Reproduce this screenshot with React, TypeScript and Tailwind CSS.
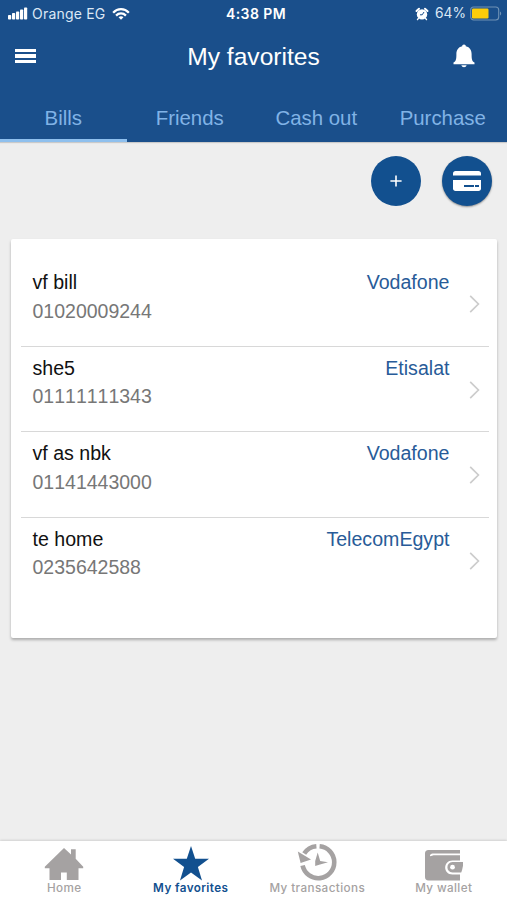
import { useState } from "react";

const tabs = ["Bills", "Friends", "Cash out", "Purchase"];

const favorites = [
  { name: "vf bill", number: "01020009244", provider: "Vodafone" },
  { name: "she5", number: "01111111343", provider: "Etisalat" },
  { name: "vf as nbk", number: "01141443000", provider: "Vodafone" },
  { name: "te home", number: "0235642588", provider: "TelecomEgypt" },
];

function StatusBar() {
  return (
    <div className="grid h-[27px] grid-cols-3 items-center pl-2 pr-[5px] text-[14px] text-[#dce8f5]">
      <div className="flex items-center">
        <svg width="20" height="13" viewBox="0 0 20 13" fill="white">
          <rect x="0" y="8" width="3.2" height="4.5" rx="0.8" />
          <rect x="4" y="6" width="3.2" height="6.5" rx="0.8" />
          <rect x="8" y="4.5" width="3.2" height="8" rx="0.8" />
          <rect x="12" y="2.5" width="3.2" height="10" rx="0.8" />
          <rect x="16" y="0.5" width="3.2" height="12" rx="0.8" />
        </svg>
        <span className="ml-1 whitespace-nowrap text-[14px] tracking-[0.2px]">Orange EG</span>
        <svg className="ml-[7px]" width="18" height="14" viewBox="0 0 19 14" fill="none" stroke="white" strokeWidth="2.4">
          <path d="M1.2 5.6C5.8 0.7 13.2 0.7 17.8 5.6" />
          <path d="M4.3 8.7C7.2 5.7 11.8 5.7 14.7 8.7" />
          <path d="M9.5 13L6.9 10.3C8.3 9 10.7 9 12.1 10.3Z" fill="white" stroke="none" />
        </svg>
      </div>
      <span className="pl-[2px] text-center text-[14px] font-semibold tracking-[0.4px] text-white">4:38 PM</span>
      <div className="flex items-center justify-end">
        <svg width="14" height="14" viewBox="0 0 14 14">
          <path d="M1.5 4L4 1.7M12.5 4L10 1.7" stroke="white" strokeWidth="2" strokeLinecap="round" />
          <path d="M3.4 11.4L2.5 12.6M10.6 11.4L11.5 12.6" stroke="white" strokeWidth="1.4" strokeLinecap="round" />
          <circle cx="7" cy="7.4" r="5.2" fill="white" />
          <path d="M9 5L7.2 7.8H5" fill="none" stroke="#1a4f8b" strokeWidth="1" />
        </svg>
        <span className="ml-[6px] text-[13.8px]">64%</span>
        <svg className="ml-[4px]" width="32" height="15" viewBox="0 0 32 15">
          <rect x="0.7" y="1" width="28" height="13" rx="3" fill="none" stroke="#6f92b5" strokeWidth="1.1" />
          <rect x="2" y="2.5" width="16.5" height="10" rx="1.2" fill="#fccd0a" />
          <path d="M30 5.5C31.6 6 31.6 9 30 9.5Z" fill="#6f92b5" />
        </svg>
      </div>
    </div>
  );
}

function HomeIcon() {
  return (
    <svg width="40" height="33" viewBox="0 0 40 33" fill="#a5a2a2">
      <path d="M20 0L27 6.4V1.3H31.7V10.7L39.2 18.8V20.3H34.5V32H22.8V24.5H17V32H5.5V20.3H0.8V18.8Z" />
    </svg>
  );
}

function StarIcon() {
  return (
    <svg width="36" height="35" viewBox="0 0 36 35" fill="#12508f">
      <path d="M18 0L22.2 12.8H36L24.9 21L29 34.5L18 26.4L7 34.5L11.1 21L0 12.8H13.8Z" />
    </svg>
  );
}

function HistoryIcon() {
  return (
    <svg width="40" height="38" viewBox="0 0 40 38">
      <g fill="none" stroke="#a5a2a2" strokeWidth="4.6">
        <path d="M22.6 3.3A16 16 0 1 1 5.6 22.6" />
        <path d="M7.2 10.6A16 16 0 0 1 19.4 3.2" />
      </g>
      <path d="M0.8 8.6L14 16.5L3.6 20Z" fill="#a5a2a2" />
      <path d="M20.7 9.5L23.2 18L31 19.3L23 21.4L18.2 23V18Z" fill="#a5a2a2" />
    </svg>
  );
}

function WalletIcon() {
  return (
    <svg width="40" height="31" viewBox="0 0 40 31">
      <path d="M4.5 0H36V3.6H8.5C6.2 3.8 5.2 6.2 6.6 6.2L9.5 5.3H36V10.5H28.5C18.8 10.5 18.8 24.5 28.5 24.5H36V30.5H4.5C2.2 30.5 1 29.3 1 27V3.5C1 1.2 2.2 0 4.5 0Z" fill="#a5a2a2" />
      <path d="M28.5 12H39V15.5C38.6 18 38.2 20 37.2 22.5H28.5C21.7 22.5 21.7 12 28.5 12Z" fill="#a5a2a2" />
      <circle cx="28.5" cy="17.2" r="2.4" fill="white" />
    </svg>
  );
}

const navItems = [
  { label: "Home", icon: <HomeIcon /> },
  { label: "My favorites", icon: <StarIcon /> },
  { label: "My transactions", icon: <HistoryIcon /> },
  { label: "My wallet", icon: <WalletIcon /> },
];

export default function App() {
  const [activeTab, setActiveTab] = useState("Bills");

  return (
    <div className="flex h-[900px] w-[507px] flex-col overflow-hidden bg-[#eeeeee] font-['Inter',sans-serif]">
      {/* Header */}
      <header className="h-[142px] bg-[#1a4f8b] shadow-[0_1px_1px_rgba(0,0,0,0.15)]">
        <StatusBar />
        <div className="flex h-[58px] items-center justify-between pl-[15px] pr-[32px]">
          <button aria-label="Menu" className="flex w-[21px] flex-col gap-[2px]">
            <span className="h-[3.5px] bg-white" />
            <span className="h-[3.5px] bg-white" />
            <span className="h-[3.5px] bg-white" />
          </button>
          <h1 className="pl-[18px] pt-[3px] font-['Liberation_Sans',sans-serif] text-[24.6px] text-white">My favorites</h1>
          <button aria-label="Notifications">
            <svg width="22" height="24" viewBox="0 0 22 24" fill="white">
              <path d="M11 0.5C12.2 0.5 12.8 1.3 12.8 2.3C17 3.2 18.6 6.5 18.6 10C18.6 15.5 19 17.3 21.5 18.5V20.2H0.5V18.5C3 17.3 3.4 15.5 3.4 10C3.4 6.5 5 3.2 9.2 2.3C9.2 1.3 9.8 0.5 11 0.5Z" />
              <path d="M8.4 21.2H13.6C13.2 23.8 8.8 23.8 8.4 21.2Z" />
            </svg>
          </button>
        </div>
        <nav className="flex h-[57px] w-[506px]">
          {tabs.map((tab) => (
            <button
              key={tab}
              onClick={() => setActiveTab(tab)}
              className={`flex-1 border-b-[3px] pt-[12px] font-['Liberation_Sans',sans-serif] text-[20.4px] text-[#81b3e6] ${
                activeTab === tab ? "border-[#8fc0ee]" : "border-transparent"
              }`}
            >
              {tab}
            </button>
          ))}
        </nav>
      </header>

      {/* Actions */}
      <div className="flex h-[97px] justify-end gap-[21px] pr-[15px] pt-[14px]">
        <button aria-label="Add favorite" className="flex size-[50px] items-center justify-center rounded-full bg-[#12508f]">
          <svg width="12" height="12" viewBox="0 0 12 12" stroke="white" strokeWidth="1.6">
            <path d="M6 0.4V11.6M0.4 6H11.6" />
          </svg>
        </button>
        <button aria-label="Cards" className="flex size-[50px] items-center justify-center rounded-full bg-[#12508f] shadow-[0_1px_2px_rgba(0,0,0,0.4)]">
          <svg width="28" height="20" viewBox="0 0 28 20">
            <path d="M2.5 0H25.5C27 0 28 1 28 2.5V4.6H0V2.5C0 1 1 0 2.5 0Z" fill="white" />
            <path d="M0 9H28V17.5C28 19 27 20 25.5 20H2.5C1 20 0 19 0 17.5Z" fill="white" />
            <path d="M11 15H21M22 15H26" stroke="#12508f" strokeWidth="2" />
          </svg>
        </button>
      </div>

      {/* Favorites list */}
      <main className="mx-[10.5px] h-[399px] rounded-[2px] bg-white pl-[10px] pr-[8px] pt-[22px] font-['Liberation_Sans',sans-serif] text-[19.6px] shadow-[0_2px_3px_rgba(0,0,0,0.28)]">
        {favorites.map((item) => (
          <div key={item.number} className="flex h-[85.5px] justify-between border-b border-[#d8d8d8] pl-[12px] pr-[9px] pt-[7px] last:border-transparent">
            <div className="flex flex-col leading-[28.5px]">
              <span className="text-[#111]">{item.name}</span>
              <span className="text-[19.5px] text-[#777] [font-kerning:none]">{item.number}</span>
            </div>
            <div className="flex">
              <span className="leading-[28.5px] text-[#285b98]">{item.provider}</span>
              <svg className="ml-[19px] mt-[27px]" width="11" height="18" viewBox="0 0 11 18" fill="none" stroke="#cccccc" strokeWidth="1.7">
                <path d="M1.2 0.8L9.4 9L1.2 17.2" />
              </svg>
            </div>
          </div>
        ))}
      </main>

      {/* Bottom navigation */}
      <footer className="mt-auto flex h-[59px] bg-white pl-px shadow-[0_-1px_2px_rgba(0,0,0,0.12)]">
        {navItems.map((item) => (
          <button
            key={item.label}
            className={`flex flex-1 flex-col items-center whitespace-nowrap text-[11.7px] leading-[14px] ${
              item.label === "My favorites" ? "font-semibold text-[#12508f]" : "font-medium text-[#a5a2a2]"
            }`}
          >
            <span className="flex h-[40px] items-end justify-center">{item.icon}</span>
            <span className="tracking-[0.4px]">{item.label}</span>
          </button>
        ))}
      </footer>
    </div>
  );
}
